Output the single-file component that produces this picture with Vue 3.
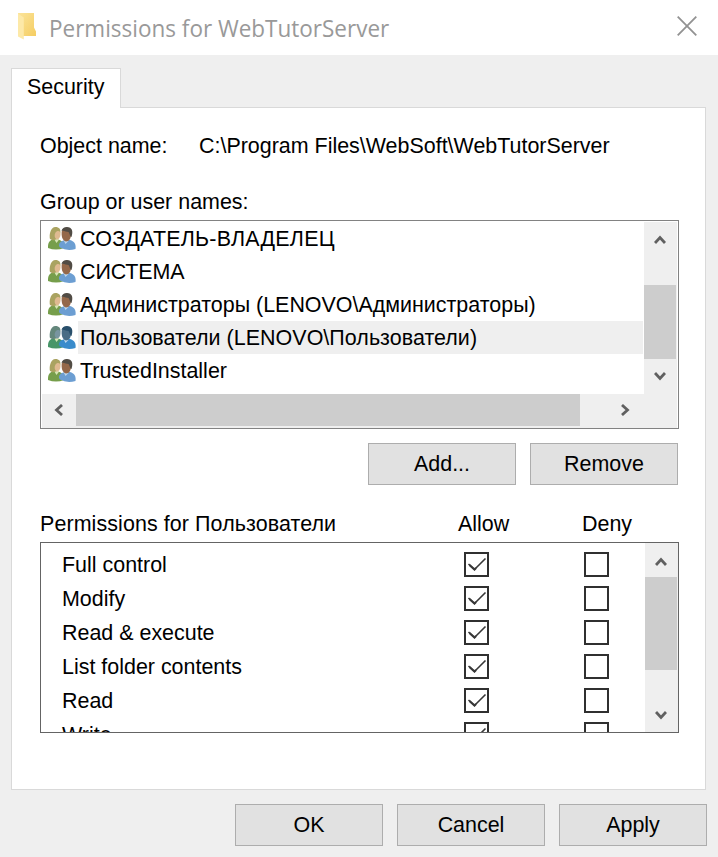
<script setup>
const users = [
  { name: 'СОЗДАТЕЛЬ-ВЛАДЕЛЕЦ', cls: 'n1' },
  { name: 'СИСТЕМА', cls: 'n2' },
  { name: 'Администраторы (LENOVO\\Администраторы)', cls: 'n3' },
  { name: 'Пользователи (LENOVO\\Пользователи)', cls: 'n4', selected: true },
  { name: 'TrustedInstaller', cls: 'n5' },
]
const permissions = ['Full control', 'Modify', 'Read & execute', 'List folder contents', 'Read', 'Write']
</script>

<template>
  <div class="dialog">
    <header class="titlebar">
      <svg class="folder" width="20" height="28" viewBox="0 0 20 28">
        <defs>
          <linearGradient id="fold" x1="0" y1="0" x2="1" y2="1">
            <stop offset="0" stop-color="#fbe49a" />
            <stop offset="1" stop-color="#f5cd62" />
          </linearGradient>
        </defs>
        <path d="M1 0H17V14.500L19 18.500V23H6L1 22Z" fill="url(#fold)" />
        <path d="M1 .5L6.800 4.500V26.500L1 23.500Z" fill="#fde9a8" />
      </svg>
      <h1>Permissions for WebTutorServer</h1>
      <svg class="close" width="20" height="20" viewBox="0 0 20 20">
        <path d="M.7 .7L19.300 19.300M19.300 .7L.7 19.300" stroke="#929292" stroke-width="1.800" fill="none" />
      </svg>
    </header>

    <div class="tab">Security</div>
    <main class="panel">
      <div class="object"><span class="label">Object name:</span><span class="path">C:\Program Files\WebSoft\WebTutorServer</span></div>
      <div class="group-label">Group or user names:</div>

      <section class="users">
        <div class="users-top">
          <div class="user-list">
            <div v-for="u in users" :key="u.name" class="user" :class="{ selected: u.selected }">
              <svg class="people" width="30" height="26" viewBox="0 0 30 26">
                <path d="M1 22C.8 17 2 15 5.500 13.500H11C15 14.500 17 17 17 22Q9 25 1 22Z" class="green" />
                <path d="M7 13L9.500 17L12.500 13Z" fill="#d7e5b4" />
                <path d="M3 13C2 10 3 1.500 8 .9C12 .7 14 3 13.300 7L10 13L6 14.500Z" class="hair" />
                <path d="M8.500 6.500C11 4 13.500 5 13.500 8C13.500 12 11 14 9.500 13.500C7.500 12 7 8.500 8.500 6.500Z" class="skin" />
                <path d="M12 20C11.500 17 14 15 17.500 14H23C27 15 29.300 18 28.500 23Q20 25.500 13 21.500Z" class="blue" />
                <path d="M16.500 14L18.500 18L22 14.500Z" fill="#bdd7ed" />
                <path d="M14.800 5C17 2 23 3 24 7C24.500 12 22 15.500 19 15.500C15.500 15 14 10 14.800 5Z" class="brown" />
                <path d="M14.500 5C15 2 17.500 .9 20 1C25 1.200 26.500 5 24.500 11C23 11 23 8 21.500 6C19 6 17 4 14.500 5Z" class="dark" />
              </svg>
              <span class="user-name"><span :class="u.cls">{{ u.name }}</span></span>
            </div>
          </div>
          <div class="vbar">
            <svg class="arrow up" viewBox="0 0 12 10"><path d="M1 8L6 2.500L11 8" /></svg>
            <div class="thumb first"></div>
            <svg class="arrow down" viewBox="0 0 12 10"><path d="M1 2L6 7.500L11 2" /></svg>
          </div>
        </div>
        <div class="hbar">
          <svg class="left" width="10" height="12" viewBox="0 0 10 12"><path d="M8 1L2.500 6L8 11" /></svg>
          <div class="hthumb"></div>
          <svg class="right" width="10" height="12" viewBox="0 0 10 12"><path d="M2 1L7.500 6L2 11" /></svg>
        </div>
      </section>

      <div class="actions">
        <button>Add...</button>
        <button>Remove</button>
      </div>

      <div class="perm-head">
        <span class="perm-title">Permissions for Пользователи</span><span class="allow">Allow</span><span>Deny</span>
      </div>
      <section class="perms">
        <div class="perm-list">
          <div v-for="p in permissions" :key="p" class="perm">
            <span class="perm-name">{{ p }}</span>
            <span class="box">
              <svg width="21" height="21" viewBox="0 0 21 21">
                <path d="M2.500 10L8.500 15.500L19.500 4.500" />
                <path class="heel" d="M3.500 11L8.500 15.500L10 14" />
              </svg>
            </span>
            <span class="box"></span>
          </div>
        </div>
        <div class="vbar">
          <svg class="arrow up" viewBox="0 0 12 10"><path d="M1 8L6 2.500L11 8" /></svg>
          <div class="thumb second"></div>
          <svg class="arrow down" viewBox="0 0 12 10"><path d="M1 2L6 7.500L11 2" /></svg>
        </div>
      </section>
    </main>

    <footer class="footer">
      <button>OK</button>
      <button>Cancel</button>
      <button>Apply</button>
    </footer>
  </div>
</template>

<style>
body { margin: 0; background: #efefef; }
</style>

<style scoped>
* { box-sizing: border-box; }
.dialog { width: 718px; height: 857px; overflow: hidden; background: #efefef; color: #000; font: 21.450px/24px "Liberation Sans", Arial, sans-serif; white-space: nowrap; }
svg { display: block; flex: none; }
.titlebar { height: 55px; background: #fff; display: flex; align-items: flex-start; padding: 13px 21px 0 17px; }
h1 { margin: 0 0 0 12px; flex: 1; font: 400 23.500px/30px "Open Sans", "Noto Sans", sans-serif; color: #999; transform: scaleX(.957); transform-origin: left; }
.close { margin-top: 3px; }
.tab { position: relative; z-index: 1; width: 110px; height: 40px; margin: 13px 0 -1px 11px; padding: 6px 0 0 15px; background: #fff; border: 1px solid #d9d9d9; border-bottom: 0; }
.panel { width: 695px; height: 683px; margin-left: 11px; padding: 26px 27px 0 28px; background: #fff; border: 1px solid #d9d9d9; }
.object { display: flex; }
.label { width: 159px; }
.group-label { margin-top: 32px; }
.users { width: 639px; height: 209px; margin-top: 6px; padding: 1px; border: 1px solid #828282; }
.users-top { display: flex; height: 172px; }
.user-list { flex: 1; }
.user { height: 33px; display: flex; align-items: center; padding-left: 5px; }
.people { margin-right: 1px; }
.user-name { flex: 1; height: 33px; line-height: 34px; padding-left: 2px; }
.n1 { letter-spacing: .23px; }
.n2 { letter-spacing: -.1px; }
.n4 { letter-spacing: .05px; }
.selected .user-name { background: #efefef; margin-right: 1px; }
.green { fill: #769e4b; } .hair { fill: #aaa361; } .skin { fill: #dfba91; }
.blue { fill: #6c9ed2; } .brown { fill: #94684a; } .dark { fill: #514c45; }
.selected .green { fill: #479568; } .selected .hair { fill: #64877c; } .selected .skin { fill: #7895a0; }
.selected .blue { fill: #398bcb; } .selected .brown { fill: #496c85; } .selected .dark { fill: #294f6b; }
.vbar { width: 33px; padding-right: 1px; background: #efefef; display: flex; flex-direction: column; align-items: center; flex: none; }
.arrow { width: 12px; height: 10px; }
.vbar path, .hbar path { fill: none; stroke: #606060; stroke-width: 2.800; }
.thumb { width: 32px; align-self: flex-start; background: #cdcdcd; }
.users .up { margin-top: 13px; }
.first { height: 74px; margin: 40px 0 12px; }
.hbar { height: 34px; background: #efefef; display: flex; align-items: center; padding-left: 12px; }
.hthumb { width: 504px; height: 32px; align-self: flex-start; background: #cdcdcd; margin: 0 40px 0 12px; }
.hbar svg { margin-top: -2px; }
.actions { display: flex; gap: 14px; margin: 14px 0 0 328px; }
button { width: 148px; height: 42px; padding: 0; border: 1px solid #adadad; border-radius: 0; background: #e1e1e1; color: #000; font: inherit; }
.perm-head { display: flex; margin-top: 27px; }
.perm-title { width: 418px; letter-spacing: .09px; }
.allow { width: 124px; }
.perms { width: 639px; height: 191px; margin-top: 6px; border: 1px solid #646464; display: flex; overflow: hidden; }
.perm-list { flex: 1; padding-top: 4px; }
.perm { height: 34px; display: flex; align-items: center; padding-left: 21px; }
.perm-name { width: 402px; padding-top: 2px; }
.box { width: 25px; height: 25px; border: 2px solid #303030; margin-right: 95px; flex: none; }
.box:last-child { margin-right: 0; }
.box path { fill: none; stroke: #383838; stroke-width: 1.600; }
.box .heel { stroke-width: 2.200; }
.perms .vbar { height: 189px; }
.perms .up { margin-top: 14px; }
.second { height: 93px; margin: 10px 0 40px; }
.footer { display: flex; gap: 14px; margin: 14px 0 0 235px; }
</style>
